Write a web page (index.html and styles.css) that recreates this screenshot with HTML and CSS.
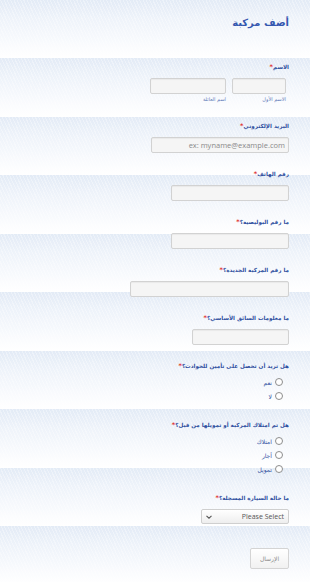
FILE: index.html
```html
<!DOCTYPE html>
<html lang="ar" dir="rtl">
<head>
<meta charset="utf-8">
<title>أضف مركبة</title>
<link rel="stylesheet" href="styles.css">
</head>
<body>
<form class="form">
  <h1 class="title">أضف مركبة</h1>

  <div class="field field-name">
    <label class="label">الاسم<span class="req">*</span></label>
    <div class="name-row">
      <div class="name-part">
        <input class="input w-first" type="text">
        <span class="sub">الاسم الأول</span>
      </div>
      <div class="name-part">
        <input class="input w-last" type="text">
        <span class="sub">اسم العائلة</span>
      </div>
    </div>
  </div>

  <div class="field">
    <label class="label">البريد الإلكتروني<span class="req">*</span></label>
    <input class="input input-latin w-email" type="text" placeholder="ex: myname@example.com">
  </div>

  <div class="field">
    <label class="label">رقم الهاتف<span class="req">*</span></label>
    <input class="input w-phone" type="text">
  </div>

  <div class="field">
    <label class="label">ما رقم البوليصية؟<span class="req">*</span></label>
    <input class="input w-phone" type="text">
  </div>

  <div class="field">
    <label class="label">ما رقم المركبة الجديدة؟<span class="req">*</span></label>
    <input class="input w-vehicle" type="text">
  </div>

  <div class="field">
    <label class="label">ما معلومات السائق الأساسي؟<span class="req">*</span></label>
    <input class="input w-driver" type="text">
  </div>

  <div class="field field-radio">
    <label class="label">هل تريد أن تحصل على تأمين للحوادث؟<span class="req">*</span></label>
    <div class="radios">
      <label class="radio"><span class="dot"></span>نعم</label>
      <label class="radio"><span class="dot"></span>لا</label>
    </div>
  </div>

  <div class="field field-radio">
    <label class="label">هل تم امتلاك المركبة أو تمويلها من قبل؟<span class="req">*</span></label>
    <div class="radios">
      <label class="radio"><span class="dot"></span>امتلاك</label>
      <label class="radio"><span class="dot"></span>أجار</label>
      <label class="radio"><span class="dot"></span>تمويل</label>
    </div>
  </div>

  <div class="field field-select">
    <label class="label">ما حالة السيارة المسجلة؟<span class="req">*</span></label>
    <div class="select">
      <span class="select-text">Please Select</span>
      <svg class="chev" width="6" height="4" viewBox="0 0 6 4"><path d="M0.5 0.8 L3 3.2 L5.5 0.8" fill="none" stroke="#555" stroke-width="1.1"/></svg>
    </div>
  </div>

  <div class="actions">
    <button class="submit" type="button">الإرسال</button>
  </div>
</form>
</body>
</html>
```

FILE: styles.css
```css
html {
  height: 100%;
}
body {
  margin: 0;
  min-height: 582px;
  direction: rtl;
  font-family: "DejaVu Sans", sans-serif;
  background:
    repeating-linear-gradient(65deg, rgba(255,255,255,0.35) 0 1px, rgba(255,255,255,0) 1px 3px),
    repeating-linear-gradient(180deg, #e3ebf6 0, #eef3fa 18px, #fbfcfe 48px, #ffffff 58.5px);
}
.form {
  display: flex;
  flex-direction: column;
  align-items: flex-start;
  padding: 14px 21px 0 21px;
}
.title {
  margin: 0 0 29px 0;
  font-size: 10px;
  line-height: 18px;
  font-weight: bold;
  color: #3558b0;
}
.field {
  display: flex;
  flex-direction: column;
  align-items: flex-start;
  gap: 5px;
  margin-bottom: 15px;
}
.label {
  font-size: 5.6px;
  line-height: 12px;
  font-weight: bold;
  color: #2f4f9f;
  white-space: nowrap;
}
.req {
  color: #e0332e;
  font-size: 6.5px;
}
.input {
  box-sizing: border-box;
  height: 16px;
  margin: 0;
  padding: 0 4px;
  border: 1px solid #d2d2d2;
  border-radius: 2px;
  background: #f5f5f5;
  box-shadow: inset 0 1px 1px rgba(0,0,0,0.05);
  font-family: "DejaVu Sans", sans-serif;
  font-size: 8px;
  color: #555;
  direction: rtl;
}
.input-latin {
  font-family: "Open Sans", sans-serif;
  font-size: 7.5px;
  padding: 0 3px;
}
.input::placeholder {
  color: #8a8a8a;
}
.w-first { width: 54px; }
.w-last { width: 76px; }
.w-email { width: 138px; }
.w-phone { width: 118px; }
.w-vehicle { width: 159px; }
.w-driver { width: 97px; }
.field-name {
  gap: 5px;
  margin-bottom: 16px;
}
.name-row {
  display: flex;
  gap: 6px;
  padding-right: 3px;
}
.name-part {
  display: flex;
  flex-direction: column;
  align-items: flex-start;
  gap: 0;
}
.sub {
  font-size: 5px;
  line-height: 10px;
  color: #5b78b8;
  white-space: nowrap;
}
.field-radio {
  gap: 3px;
  margin-bottom: 16px;
}
.radios {
  display: flex;
  flex-direction: column;
  padding-right: 6px;
}
.radio {
  display: flex;
  align-items: center;
  gap: 3px;
  height: 14px;
  font-size: 6px;
  color: #2f4f9f;
}
.dot {
  box-sizing: border-box;
  width: 8px;
  height: 8px;
  border: 1px solid #8d8d8d;
  border-radius: 50%;
  background: #fff;
}
.field-select {
  margin-bottom: 24px;
}
.select {
  box-sizing: border-box;
  display: flex;
  align-items: center;
  justify-content: space-between;
  width: 88px;
  height: 15px;
  padding: 0 4px 0 4px;
  border: 1px solid #cfcfcf;
  border-radius: 2px;
  background: linear-gradient(#ffffff, #eeeeee);
  font-family: "Open Sans", sans-serif;
  font-size: 7px;
  color: #555;
}
.chev {
  display: block;
}
.actions {
  display: flex;
}
.submit {
  box-sizing: border-box;
  width: 39px;
  height: 21px;
  margin: 0;
  padding: 0;
  border: 1px solid #d4d4d4;
  border-radius: 2px;
  background: linear-gradient(#ffffff, #f1f1f1);
  font-family: "DejaVu Sans", sans-serif;
  font-size: 6px;
  color: #8a8a8a;
}
```
